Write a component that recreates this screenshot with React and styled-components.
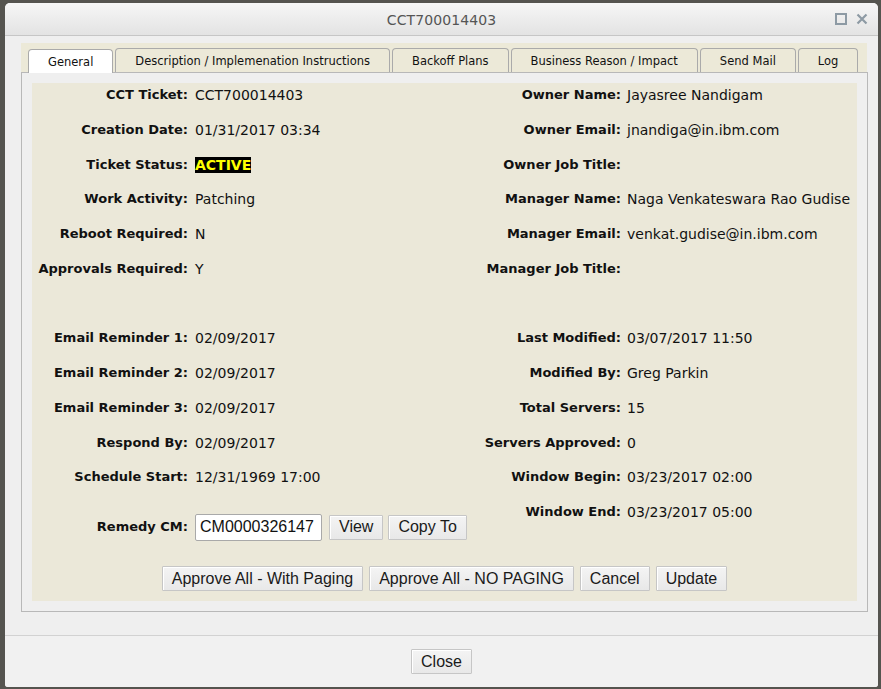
import React from 'react';
import styled, { createGlobalStyle } from 'styled-components';

const GlobalStyle = createGlobalStyle`
  html, body {
    margin: 0;
    padding: 0;
    background: #55544f;
    height: 689px;
    overflow: hidden;
    font-family: 'DejaVu Sans', sans-serif;
  }
`;

const leftFields = [
  ['CCT Ticket:', 'CCT700014403'],
  ['Creation Date:', '01/31/2017 03:34'],
  ['Ticket Status:', 'ACTIVE', true],
  ['Work Activity:', 'Patching'],
  ['Reboot Required:', 'N'],
  ['Approvals Required:', 'Y'],
  null,
  ['Email Reminder 1:', '02/09/2017'],
  ['Email Reminder 2:', '02/09/2017'],
  ['Email Reminder 3:', '02/09/2017'],
  ['Respond By:', '02/09/2017'],
  ['Schedule Start:', '12/31/1969 17:00'],
];

const rightFields = [
  ['Owner Name:', 'Jayasree Nandigam'],
  ['Owner Email:', 'jnandiga@in.ibm.com'],
  ['Owner Job Title:', ''],
  ['Manager Name:', 'Naga Venkateswara Rao Gudise'],
  ['Manager Email:', 'venkat.gudise@in.ibm.com'],
  ['Manager Job Title:', ''],
  null,
  ['Last Modified:', '03/07/2017 11:50'],
  ['Modified By:', 'Greg Parkin'],
  ['Total Servers:', '15'],
  ['Servers Approved:', '0'],
  ['Window Begin:', '03/23/2017 02:00'],
  ['Window End:', '03/23/2017 05:00'],
];

const tabs = [
  'General',
  'Description / Implemenation Instructions',
  'Backoff Plans',
  'Business Reason / Impact',
  'Send Mail',
  'Log',
];

const App = () => {
  return (
    <>
      <GlobalStyle />
      <Dialog>
        <TitleBar>
          <Title>CCT700014403</Title>
          <TitleIcons>
            <svg width="12" height="12" viewBox="0 0 12 12">
              <rect x="1" y="1" width="10" height="10" fill="none" stroke="#8d9aa4" strokeWidth="2" />
            </svg>
            <svg width="12" height="12" viewBox="0 0 12 12">
              <path d="M1.5 1.5 L10.5 10.5 M10.5 1.5 L1.5 10.5" stroke="#8d9aa4" strokeWidth="2.2" />
            </svg>
          </TitleIcons>
        </TitleBar>

        <Body>
          <TabStrip>
            {tabs.map((t, i) => (
              <Tab key={t} $active={i === 0}>{t}</Tab>
            ))}
          </TabStrip>
          <Panel>
            <Content>
              <Columns>
                <Column $width={412}>
                  {leftFields.map((f, i) =>
                    f ? (
                      <Field key={i} $labelWidth={156} $gap={7}>
                        <Label>{f[0]}</Label>
                        <Value>{f[2] ? <Status>{f[1]}</Status> : f[1]}</Value>
                      </Field>
                    ) : (
                      <Field key={i} />
                    )
                  )}
                  <Field $labelWidth={156} $gap={7} $tall>
                    <Label>Remedy CM:</Label>
                    <Controls>
                      <TextInput defaultValue="CM0000326147" />
                      <Button>View</Button>
                      <Button>Copy To</Button>
                    </Controls>
                  </Field>
                </Column>
                <Column>
                  {rightFields.map((f, i) =>
                    f ? (
                      <Field key={i} $labelWidth={177} $gap={6}>
                        <Label>{f[0]}</Label>
                        <Value>{f[1]}</Value>
                      </Field>
                    ) : (
                      <Field key={i} />
                    )
                  )}
                </Column>
              </Columns>
              <Actions>
                <Button>Approve All - With Paging</Button>
                <Button>Approve All - NO PAGING</Button>
                <Button>Cancel</Button>
                <Button>Update</Button>
              </Actions>
            </Content>
          </Panel>
        </Body>

        <Footer>
          <Button>Close</Button>
        </Footer>
      </Dialog>
    </>
  );
};

export default App;

const Dialog = styled.div`
  margin: 3px 0 0 5px;
  width: 873px;
  height: 684px;
  display: flex;
  flex-direction: column;
  background: #efefef;
  border-radius: 5px 5px 3px 3px;
  overflow: hidden;
`;

const TitleBar = styled.div`
  height: 32px;
  flex-shrink: 0;
  display: flex;
  align-items: center;
  justify-content: center;
  position: relative;
  background: linear-gradient(#f6f6f6, #e3e3e3);
  border-bottom: 1px solid #c6c6c6;
`;

const Title = styled.div`
  font-size: 14px;
  color: #555;
  letter-spacing: 0.1px;
  padding-top: 2px;
`;

const TitleIcons = styled.div`
  position: absolute;
  right: 10px;
  top: 10px;
  display: flex;
  gap: 9px;
`;

const Body = styled.div`
  flex: 1;
  padding: 7px 10px 22px 16px;
  border-bottom: 1px solid #d2d2d2;
`;

const TabStrip = styled.div`
  height: 29px;
  box-sizing: border-box;
  background: #ece9d8;
  margin-right: 1px;
  padding: 5px 0 0 7px;
  display: flex;
  align-items: flex-end;
  gap: 2px;
`;

const Tab = styled.div`
  height: 24px;
  box-sizing: border-box;
  padding: 0 19px;
  display: flex;
  align-items: center;
  font-size: 11.5px;
  color: #111;
  white-space: nowrap;
  border: 1px solid #aaa;
  border-bottom: none;
  border-radius: 4px 4px 0 0;
  background: ${p => (p.$active ? '#ffffff' : '#ece9d8')};
  position: relative;
  top: ${p => (p.$active ? '1px' : '0')};
`;

const Panel = styled.div`
  border: 1px solid #b8b8b8;
  padding: 10px;
  background: #efefef;
`;

const Content = styled.div`
  background: #ebe8d9;
  padding: 2px 0 10px;
`;

const Columns = styled.div`
  display: flex;
`;

const Column = styled.div`
  width: ${p => (p.$width ? `${p.$width}px` : 'auto')};
  flex: ${p => (p.$width ? '0 0 auto' : '1')};
`;

const Field = styled.div`
  display: grid;
  grid-template-columns: ${p => p.$labelWidth || 0}px 1fr;
  column-gap: ${p => p.$gap || 0}px;
  height: ${p => (p.$tall ? '50px' : '34.75px')};
  align-items: ${p => (p.$tall ? 'center' : 'start')};
`;

const Label = styled.div`
  text-align: right;
  font-size: 13px;
  font-weight: bold;
  line-height: 20px;
  color: #111;
  white-space: nowrap;
`;

const Value = styled.div`
  font-size: 14px;
  line-height: 20px;
  color: #111;
  white-space: nowrap;
`;

const Status = styled.span`
  background: #000;
  color: #ffff00;
  font-weight: bold;
  line-height: 16px;
  display: inline-block;
`;

const Controls = styled.div`
  display: flex;
  align-items: center;
  gap: 5px;
`;

const TextInput = styled.input`
  width: 127px;
  height: 27px;
  box-sizing: border-box;
  margin-right: 2px;
  border: 1px solid #a9a9a9;
  border-radius: 2px;
  background: #fff;
  padding: 0 4px;
  font-family: 'Liberation Sans', Arial, sans-serif;
  font-size: 16px;
  color: #111;
`;

const Button = styled.button`
  height: 25px;
  box-sizing: border-box;
  padding: 0 9px;
  border: 1px solid #c6c6c6;
  border-radius: 1px;
  background: linear-gradient(#f4f4f4, #e8e8e8);
  box-shadow: inset 1px 1px 0 #ffffff;
  font-family: 'Liberation Sans', Arial, sans-serif;
  font-size: 16px;
  color: #1a1a1a;
  white-space: nowrap;
`;

const Actions = styled.div`
  margin-top: 14px;
  display: flex;
  justify-content: center;
  gap: 6px;
`;

const Footer = styled.div`
  height: 51px;
  flex-shrink: 0;
  display: flex;
  align-items: center;
  justify-content: center;
  background: #f1f1f1;
`;
